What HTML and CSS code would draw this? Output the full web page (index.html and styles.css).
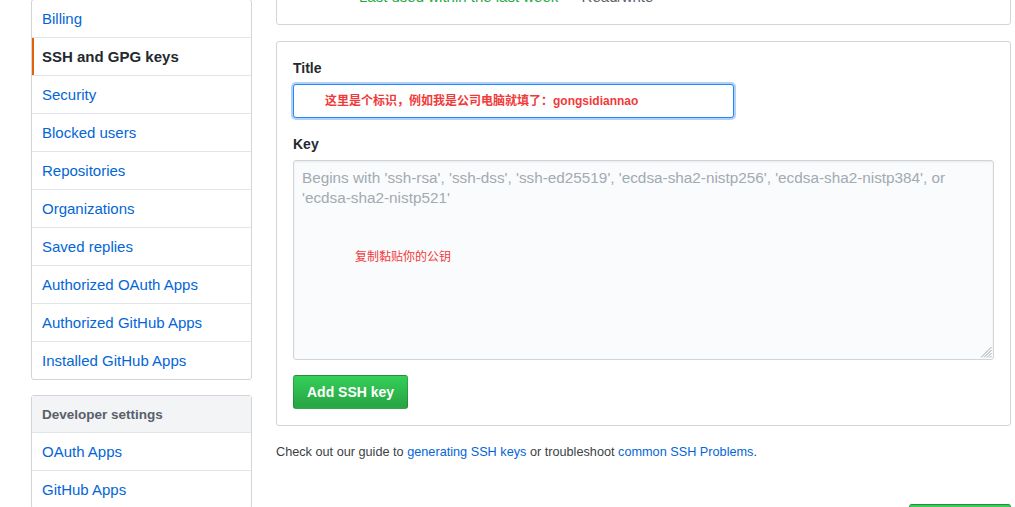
FILE: index.html
```html
<!DOCTYPE html>
<html lang="en">
<head>
<meta charset="utf-8">
<title>SSH and GPG keys</title>
<link rel="stylesheet" href="styles.css">
</head>
<body>
<div class="page">
  <aside class="sidebar">
    <nav class="menu menu-first">
      <a class="menu-item">Billing</a>
      <a class="menu-item selected">SSH and GPG keys</a>
      <a class="menu-item">Security</a>
      <a class="menu-item">Blocked users</a>
      <a class="menu-item">Repositories</a>
      <a class="menu-item">Organizations</a>
      <a class="menu-item">Saved replies</a>
      <a class="menu-item">Authorized OAuth Apps</a>
      <a class="menu-item">Authorized GitHub Apps</a>
      <a class="menu-item">Installed GitHub Apps</a>
    </nav>
    <nav class="menu menu-dev">
      <div class="menu-heading">Developer settings</div>
      <a class="menu-item">OAuth Apps</a>
      <a class="menu-item">GitHub Apps</a>
    </nav>
  </aside>

  <main class="main">
    <div class="box box-keys">
      <div class="key-meta"><span class="text-green">Last used within the last week</span><span class="text-gray"> — Read/write</span></div>
    </div>

    <div class="box box-form">
      <div class="form-group">
        <label class="form-label">Title</label>
        <div class="input focused"><span class="note note-bold">这里是个标识，例如我是公司电脑就填了：gongsidiannao</span></div>
      </div>
      <div class="form-group">
        <label class="form-label">Key</label>
        <div class="textarea">
          <div class="placeholder">Begins with 'ssh-rsa', 'ssh-dss', 'ssh-ed25519', 'ecdsa-sha2-nistp256', 'ecdsa-sha2-nistp384', or<br>'ecdsa-sha2-nistp521'</div>
          <span class="note note-paste">复制黏贴你的公钥</span>
          <svg class="grip" width="12" height="12" viewBox="0 0 12 12">
            <line x1="11.5" y1="1" x2="1" y2="11.5" stroke="#a0a5ab" stroke-width="1"/>
            <line x1="11.5" y1="4" x2="4" y2="11.5" stroke="#a0a5ab" stroke-width="1"/>
            <line x1="11.5" y1="7" x2="7" y2="11.5" stroke="#a0a5ab" stroke-width="1"/>
            <line x1="11.5" y1="10" x2="10" y2="11.5" stroke="#a0a5ab" stroke-width="1"/>
          </svg>
        </div>
      </div>
      <button class="btn-primary">Add SSH key</button>
    </div>

    <p class="help">Check out our guide to <a class="link">generating SSH keys</a> or troubleshoot <a class="link">common SSH Problems</a>.</p>

    <div class="next-row"><span class="btn-peek"></span></div>
  </main>
</div>
</body>
</html>
```

FILE: styles.css
```css
* { box-sizing: border-box; }

html, body {
  margin: 0;
  padding: 0;
  background: #fff;
  overflow: hidden;
}

body {
  font-family: "Liberation Sans", Arial, "Noto Sans CJK SC", sans-serif;
  font-size: 14px;
  line-height: 20px;
  color: #24292e;
}

.page {
  display: flex;
  align-items: flex-start;
  gap: 24px;
  padding: 0 4px 0 31px;
  height: 507px;
}

.sidebar {
  width: 221px;
  flex: none;
  display: flex;
  flex-direction: column;
  gap: 15px;
}

.menu {
  border: 1px solid #d1d5da;
  border-radius: 3px;
  background: #fff;
  display: flex;
  flex-direction: column;
}

.menu-first { margin-top: -1px; }

.menu-item {
  position: relative;
  display: block;
  padding: 9px 10px 7px;
  font-size: 15px;
  line-height: 20px;
  height: 38px;
  border-bottom: 1px solid #e1e4e8;
  color: #0366d6;
  text-decoration: none;
}

.menu-item:last-child { border-bottom: 0; height: 37px; }

.menu-item.selected {
  color: #24292e;
  font-weight: bold;
}

.menu-item.selected::before {
  content: "";
  position: absolute;
  top: 0;
  bottom: 0;
  left: 0;
  width: 2px;
  background: #e36209;
}

.menu-heading {
  padding: 9px 10px 7px;
  height: 37px;
  line-height: 20px;
  font-size: 13.5px;
  font-weight: bold;
  color: #586069;
  background: #f3f4f6;
  border-bottom: 1px solid #e1e4e8;
}

.main {
  flex: 1;
  min-width: 0;
  display: flex;
  flex-direction: column;
}

.box {
  border: 1px solid #d1d5da;
  border-radius: 3px;
  background: #fff;
}

.box-keys {
  margin-top: -30px;
  padding: 16px 16px 17px;
}

.key-meta {
  padding-left: 66px;
  font-size: 15px;
  line-height: 20px;
}

.text-green { color: #28a745; }
.text-gray { color: #586069; }

.box-form {
  margin-top: 16px;
  padding: 16px;
  display: flex;
  flex-direction: column;
  align-items: flex-start;
}

.form-group {
  display: flex;
  flex-direction: column;
  gap: 6px;
  width: 100%;
  margin-bottom: 16px;
}

.form-group + .form-group { margin-bottom: 15px; }

.form-label {
  font-weight: bold;
  line-height: 20px;
}

.input {
  width: 441px;
  height: 34px;
  padding: 0 8px 0 31px;
  display: flex;
  align-items: center;
  border: 1px solid #d1d5da;
  border-radius: 3px;
  background: #fff;
}

.input.focused {
  border-color: #2188ff;
  box-shadow: 0 0 0 2px rgba(3, 102, 214, 0.3);
}

.note {
  color: #f03a3a;
  font-size: 12px;
  line-height: 16px;
  font-family: "Liberation Sans", Arial, "Noto Sans CJK SC", sans-serif;
}

.note-bold { font-weight: bold; }

.textarea {
  position: relative;
  width: 100%;
  height: 200px;
  padding: 7px 8px 5px;
  border: 1px solid #d1d5da;
  border-radius: 3px;
  background: #fafbfc;
  box-shadow: inset 0 1px 2px rgba(27, 31, 35, 0.075);
}

.placeholder {
  color: #a3aab1;
  font-size: 15.3px;
  line-height: 20px;
  white-space: nowrap;
}

.note-paste {
  position: absolute;
  left: 61px;
  top: 88px;
}

.grip {
  position: absolute;
  right: 1px;
  bottom: 1px;
}

.btn-primary {
  height: 34px;
  padding: 0 13px;
  border: 1px solid rgba(27, 31, 35, 0.2);
  border-radius: 3px;
  background: linear-gradient(-180deg, #34d058 0%, #28a745 90%);
  color: #fff;
  font-family: "Liberation Sans", Arial, sans-serif;
  font-size: 14px;
  font-weight: bold;
  line-height: 20px;
  cursor: pointer;
}

.help {
  margin: 16px 0 0;
  font-size: 12.7px;
  line-height: 20px;
  color: #3a3f44;
}

.link {
  color: #0366d6;
  text-decoration: none;
}

.next-row {
  display: flex;
  justify-content: flex-end;
  margin-top: 42px;
}

.btn-peek {
  display: block;
  width: 102px;
  height: 34px;
  border: 1px solid rgba(27, 31, 35, 0.2);
  border-radius: 3px;
  background: linear-gradient(-180deg, #34d058 0%, #28a745 90%);
}
```
